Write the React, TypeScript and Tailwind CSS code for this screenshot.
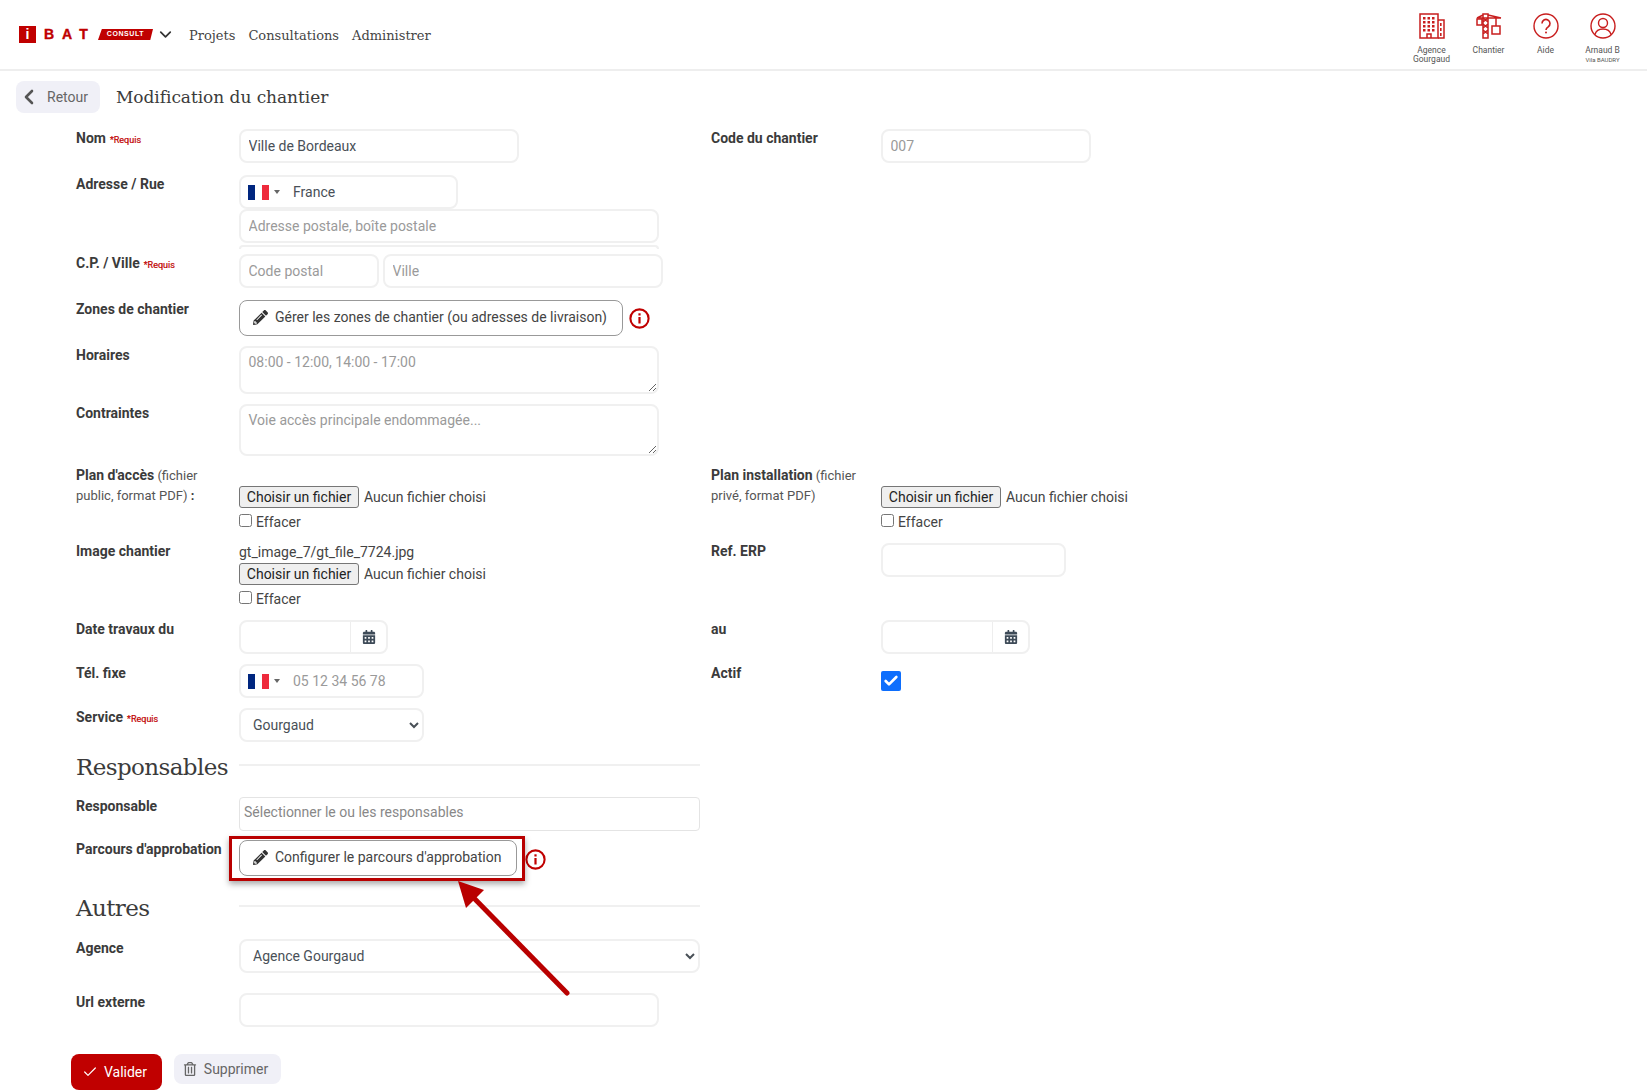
import React from "react";
import { FaPencilAlt, FaCalendarAlt, FaRegTrashAlt } from "react-icons/fa";
import { Check, ChevronDown, ChevronLeft } from "lucide-react";

const inputCls =
  "block h-[34px] rounded-lg border-2 border-[#f0f0f0] bg-white px-[7.5px] text-[14px] text-[#495057] placeholder:text-[#9a9a9a] outline-none";

const Label = ({ children, req }: { children: React.ReactNode; req?: boolean }) => (
  <div className="-mt-[1px] w-[163px] shrink-0 text-[14px] font-bold leading-[20px] text-[#3b3b3b]">
    {children}
    {req && <span className="ml-[4px] text-[9px] font-normal text-[#c00000] [-webkit-text-stroke:0.2px_#c00000]">*Requis</span>}
  </div>
);

const Flag = () => (
  <svg width="21" height="15" viewBox="0 0 21 15" className="shrink-0">
    <rect width="7" height="15" fill="#00267f" />
    <rect x="7" width="7" height="15" fill="#ffffff" />
    <rect x="14" width="7" height="15" fill="#ee2a3c" />
  </svg>
);

const Info = ({ className }: { className?: string }) => (
  <svg width="21" height="21" viewBox="0 0 21 21" className={className}>
    <circle cx="10.5" cy="10.5" r="9.1" fill="none" stroke="#c00000" strokeWidth="2.1" />
    <rect x="9.4" y="9" width="2.2" height="6.5" fill="#c00000" />
    <rect x="9.4" y="5.3" width="2.2" height="2.2" fill="#c00000" />
  </svg>
);

const PhoneInput = ({ w, value, placeholder }: { w: string; value?: string; placeholder?: string }) => (
  <div className={`flex h-[34px] items-center rounded-lg border-2 border-[#f0f0f0] pl-[7px] text-[14px] ${w}`}>
    <Flag />
    <span className="ml-[5px] mr-[13px] h-0 w-0 border-x-[3px] border-t-[4px] border-x-transparent border-t-[#666]" />
    {value ? (
      <span className="text-[#495057]">{value}</span>
    ) : (
      <span className="text-[#9a9a9a]">{placeholder}</span>
    )}
  </div>
);

const FileBlock = () => (
  <div>
    <div className="flex items-center text-[14px] leading-[22px] text-[#444]">
      <button type="button" className="h-[22px] w-[120px] rounded-[3px] border border-[#767676] bg-[#efefef] text-[14px] leading-[18px] text-[#222]">
        Choisir un fichier
      </button>
      <span className="ml-[5px]">Aucun fichier choisi</span>
    </div>
    <label className="mt-[5px] flex h-[14px] items-center text-[14px] text-[#444]">
      <input type="checkbox" className="m-0 h-[13px] w-[13px]" />
      <span className="ml-[4px] mt-[4px]">Effacer</span>
    </label>
  </div>
);

const DateInput = () => (
  <div className="flex h-[34px] w-[149px] rounded-lg border-2 border-[#f0f0f0]">
    <div className="w-[110px] border-r border-[#eeeeee]" />
    <div className="flex flex-1 items-center justify-center text-[#3d4a57]">
      <FaCalendarAlt size={14} />
    </div>
  </div>
);

const SlabHeading = ({ children }: { children: React.ReactNode }) => (
  <div className="flex items-center">
    <div className="w-[163px] shrink-0 font-['DejaVu_Serif',serif] text-[23px] leading-[30px] text-[#3b3b3b] [letter-spacing:-0.6px]">
      {children}
    </div>
    <div className="-mt-[4px] h-[2px] w-[461px] bg-[#f0f0f0]" />
  </div>
);

const ToolIcon = ({ children, label, sub, small }: { children: React.ReactNode; label: string; sub?: string; small?: boolean }) => (
  <div className="flex w-[57px] flex-col items-center">
    <div className="flex h-[26px] items-center justify-center">{children}</div>
    <div className="mt-[6px] text-center text-[8.5px] leading-[10px] text-[#555]">{label}</div>
    {sub && <div className={`text-center leading-[9px] text-[#555] ${small ? "text-[6px]" : "text-[8.5px]"}`}>{sub}</div>}
  </div>
);

const Building = () => (
  <svg width="26" height="26" viewBox="0 0 26 26" fill="none" stroke="#c81e1e" strokeWidth="1.5">
    <rect x="1" y="1" width="18" height="24" />
    <path d="M19 7h6v18h-6" />
    <path d="M8 25v-4h4v4" />
    <g fill="#c81e1e" stroke="none">
      {[4, 8.5, 13].map((x) =>
        [4, 8, 12, 16].map((y) => <rect key={`${x}-${y}`} x={x} y={y} width="2.5" height="2.5" />)
      )}
      <rect x="21" y="10" width="1.6" height="3" />
      <rect x="21" y="15" width="1.6" height="3" />
      <rect x="21" y="20" width="1.6" height="3" />
    </g>
  </svg>
);

const Crane = () => (
  <svg width="26" height="26" viewBox="0 0 26 26" fill="none" stroke="#c81e1e" strokeWidth="1.5">
    <path d="M7 1h5v24H7zM7 5l5 4M12 5l-5 4M7 11l5 4M12 11l-5 4M7 17l5 4M12 17l-5 4" />
    <path d="M1 5h24M7 2L1 5M12 2l13 3" />
    <rect x="1" y="6" width="5" height="6" />
    <path d="M20 5v8" />
    <rect x="16" y="13" width="8" height="8" />
  </svg>
);

const Help = () => (
  <svg width="26" height="26" viewBox="0 0 26 26" fill="none" stroke="#c81e1e" strokeWidth="1.4">
    <circle cx="13" cy="13" r="12" />
    <path d="M9 10.5a4 4 0 1 1 6.2 3.3c-1.4 1-2.2 1.6-2.2 3.2" strokeWidth="1.6" />
    <circle cx="13" cy="19.5" r="1" fill="#c81e1e" stroke="none" />
  </svg>
);

const User = () => (
  <svg width="26" height="26" viewBox="0 0 26 26" fill="none" stroke="#c81e1e" strokeWidth="1.4">
    <circle cx="13" cy="13" r="12" />
    <circle cx="13" cy="10" r="4.5" />
    <path d="M5 21.5c1-4 4-5.5 8-5.5s7 1.5 8 5.5" />
  </svg>
);

const Logo = () => (
  <div className="flex items-center">
    <div className="flex h-[17px] w-[17px] items-center justify-center bg-[#c00000] font-['Liberation_Sans',sans-serif] text-[14px] font-bold text-white">
      i
    </div>
    <div className="ml-[8px] w-[50px] font-['Liberation_Sans',sans-serif] text-[14px] font-bold leading-[17px] tracking-[8px] text-[#c00000] [-webkit-text-stroke:0.4px_#c00000]">
      BAT
    </div>
    <div className="ml-[4px] flex h-[11px] w-[55px] items-center justify-center bg-[#c00000] font-['Liberation_Sans',sans-serif] text-[7px] font-bold tracking-[0.6px] text-white [clip-path:polygon(7%_0,100%_0,95%_100%,0_100%)]">
      CONSULT
    </div>
  </div>
);

export default function App() {
  return (
    <div className="relative h-[1090px] w-[1647px] overflow-hidden bg-white font-['Roboto',sans-serif]">
      <header className="flex h-[71px] items-center border-b-2 border-[#eeeeee] pl-[19px] pr-[16px]">
        <Logo />
        <ChevronDown size={19} strokeWidth={2.2} className="ml-[3px] text-[#333]" />
        <nav className="ml-[14px] mt-[2px] flex gap-[13px] font-['DejaVu_Serif',serif] text-[13px] text-[#444] [letter-spacing:0px]">
          <span>Projets</span>
          <span>Consultations</span>
          <span>Administrer</span>
        </nav>
        <div className="ml-auto flex self-start pt-[13px]">
          <ToolIcon label="Agence" sub="Gourgaud">
            <Building />
          </ToolIcon>
          <ToolIcon label="Chantier">
            <Crane />
          </ToolIcon>
          <ToolIcon label="Aide">
            <Help />
          </ToolIcon>
          <ToolIcon label="Arnaud B" sub="Vila BAUDRY" small>
            <User />
          </ToolIcon>
        </div>
      </header>

      <div className="mt-[10px] flex items-center pl-[16px]">
        <button type="button" className="flex h-[32px] w-[84px] items-center rounded-lg bg-[#f0f0f7] pl-[1px] text-[14px] text-[#666]">
          <ChevronLeft size={24} strokeWidth={2.6} className="text-[#555]" />
          <span className="ml-[6px]">Retour</span>
        </button>
        <h1 className="ml-[16px] font-['DejaVu_Serif',serif] text-[17px] leading-[32px] text-[#3b3b3b] [letter-spacing:-0.05px]">
          Modification du chantier
        </h1>
      </div>

      <form className="pl-[76px]">
        <div className="mt-[16px] flex">
          <div className="flex w-[635px]">
            <Label req>Nom</Label>
            <input readOnly value="Ville de Bordeaux" className={`${inputCls} w-[280px]`} />
          </div>
          <Label>Code du chantier</Label>
          <div className="ml-[7px]">
            <input readOnly placeholder="007" className={`${inputCls} w-[210px]`} />
          </div>
        </div>

        <div className="mt-[12px] flex">
          <Label>Adresse / Rue</Label>
          <div>
            <PhoneInput w="w-[219px]" value="France" />
            <input readOnly placeholder="Adresse postale, boîte postale" className={`${inputCls} w-[420px]`} />
            <div className="mt-[2px] h-[4px] w-[420px] rounded-t-lg border-x-2 border-t-2 border-[#f0f0f0]" />
          </div>
        </div>

        <div className="mt-[5px] flex">
          <Label req>C.P. / Ville</Label>
          <div className="flex gap-[4px]">
            <input readOnly placeholder="Code postal" className={`${inputCls} w-[140px]`} />
            <input readOnly placeholder="Ville" className={`${inputCls} w-[280px]`} />
          </div>
        </div>

        <div className="mt-[12px] flex">
          <Label>Zones de chantier</Label>
          <button type="button" className="flex h-[36px] w-[384px] items-center rounded-lg border border-[#999] pb-[2px] pl-[13px] text-[14px] text-[#444]">
            <FaPencilAlt size={15} className="text-[#333]" />
            <span className="ml-[7px]">Gérer les zones de chantier (ou adresses de livraison)</span>
          </button>
          <Info className="ml-[6px] mt-[8px]" />
        </div>

        <div className="mt-[10px] flex">
          <Label>Horaires</Label>
          <textarea readOnly placeholder="08:00 - 12:00, 14:00 - 17:00" className={`${inputCls} h-[48px] w-[420px] py-[4px]`} />
        </div>

        <div className="mt-[10px] flex">
          <Label>Contraintes</Label>
          <textarea readOnly placeholder="Voie accès principale endommagée..." className={`${inputCls} h-[52px] w-[420px] py-[4px]`} />
        </div>

        <div className="mt-[11px] flex">
          <div className="flex w-[635px]">
            <div className="-mt-[2px] w-[163px] shrink-0 pr-[28px] text-[13px] leading-[20px] text-[#555]">
              <b className="text-[14px] text-[#3b3b3b]">Plan d'accès</b> (fichier public, format PDF) <b className="text-[#3b3b3b]">:</b>
            </div>
            <div className="pt-[19px]">
              <FileBlock />
            </div>
          </div>
          <div className="-mt-[2px] w-[170px] shrink-0 pr-[10px] text-[13px] leading-[20px] text-[#555]">
            <b className="text-[14px] text-[#3b3b3b]">Plan installation</b> (fichier privé, format PDF)
          </div>
          <div className="pt-[19px]">
            <FileBlock />
          </div>
        </div>

        <div className="mt-[15px] flex">
          <div className="flex w-[635px]">
            <Label>Image chantier</Label>
            <div>
              <div className="h-[20px] text-[14px] leading-[20px] text-[#444]">gt_image_7/gt_file_7724.jpg</div>
              <div className="mt-[1px]">
                <FileBlock />
              </div>
            </div>
          </div>
          <Label>Ref. ERP</Label>
          <div className="ml-[7px] mt-[1px]">
            <input readOnly className={`${inputCls} w-[185px]`} />
          </div>
        </div>

        <div className="mt-[16px] flex">
          <div className="flex w-[635px]">
            <Label>Date travaux du</Label>
            <DateInput />
          </div>
          <Label>au</Label>
          <div className="ml-[7px]">
            <DateInput />
          </div>
        </div>

        <div className="mt-[10px] flex">
          <div className="flex w-[635px]">
            <Label>Tél. fixe</Label>
            <PhoneInput w="w-[185px]" placeholder="05 12 34 56 78" />
          </div>
          <Label>Actif</Label>
          <div className="ml-[7px] pt-[7px]">
            <div className="flex h-[20px] w-[20px] items-center justify-center rounded-[2px] bg-[#0d6efd] text-white">
              <Check size={16} strokeWidth={4} />
            </div>
          </div>
        </div>

        <div className="mt-[10px] flex">
          <Label req>Service</Label>
          <select className={`${inputCls} w-[185px] pl-[8px]`} defaultValue="Gourgaud">
            <option>Gourgaud</option>
          </select>
        </div>

        <div className="mt-[10px]">
          <SlabHeading>Responsables</SlabHeading>
        </div>

        <div className="mt-[15px] flex">
          <Label>Responsable</Label>
          <input readOnly placeholder="Sélectionner le ou les responsables" className="block h-[34px] w-[461px] rounded-[4px] border border-[#e4e4e4] px-[4px] pb-[4px] text-[14px] placeholder:text-[#888]" />
        </div>

        <div className="mt-[9px] flex">
          <Label>Parcours d'approbation</Label>
          <div className="relative">
            <button type="button" className="flex h-[36px] w-[278px] items-center rounded-lg border border-[#999] pb-[2px] pl-[13px] text-[14px] text-[#444]">
              <FaPencilAlt size={15} className="text-[#333]" />
              <span className="ml-[7px]">Configurer le parcours d'approbation</span>
            </button>
            <div className="pointer-events-none absolute left-[-10px] top-[-4px] h-[45px] w-[296px] border-[3px] border-[#b90000] shadow-[0_3px_6px_rgba(0,0,0,0.35)]" />
          </div>
          <Info className="ml-[8px] mt-[9px]" />
        </div>

        <div className="mt-[17px]">
          <SlabHeading>Autres</SlabHeading>
        </div>

        <div className="mt-[16px] flex">
          <Label>Agence</Label>
          <select className={`${inputCls} w-[461px] pl-[8px]`} defaultValue="Agence Gourgaud">
            <option>Agence Gourgaud</option>
          </select>
        </div>

        <div className="mt-[20px] flex">
          <Label>Url externe</Label>
          <input readOnly className={`${inputCls} w-[420px]`} />
        </div>
      </form>

      <div className="ml-[71px] mt-[27px] flex items-start gap-[12px]">
        <button type="button" className="flex h-[36px] w-[91px] items-center justify-center rounded-lg bg-[#c00000] pr-[4px] text-[14px] text-white">
          <Check size={16} strokeWidth={1.8} />
          <span className="ml-[6px]">Valider</span>
        </button>
        <button type="button" className="flex h-[30px] w-[107px] items-center justify-center rounded-lg bg-[#f0f0f7] pr-[4px] text-[14px] text-[#666]">
          <FaRegTrashAlt size={14} />
          <span className="ml-[7px]">Supprimer</span>
        </button>
      </div>

      <svg className="pointer-events-none absolute left-[439px] top-[869px]" width="150" height="130" viewBox="0 0 150 130">
        <line x1="128" y1="124" x2="28" y2="22" stroke="#b90000" strokeWidth="5" strokeLinecap="round" />
        <polygon points="19,12 45,21 27,39" fill="#b90000" />
      </svg>
    </div>
  );
}
